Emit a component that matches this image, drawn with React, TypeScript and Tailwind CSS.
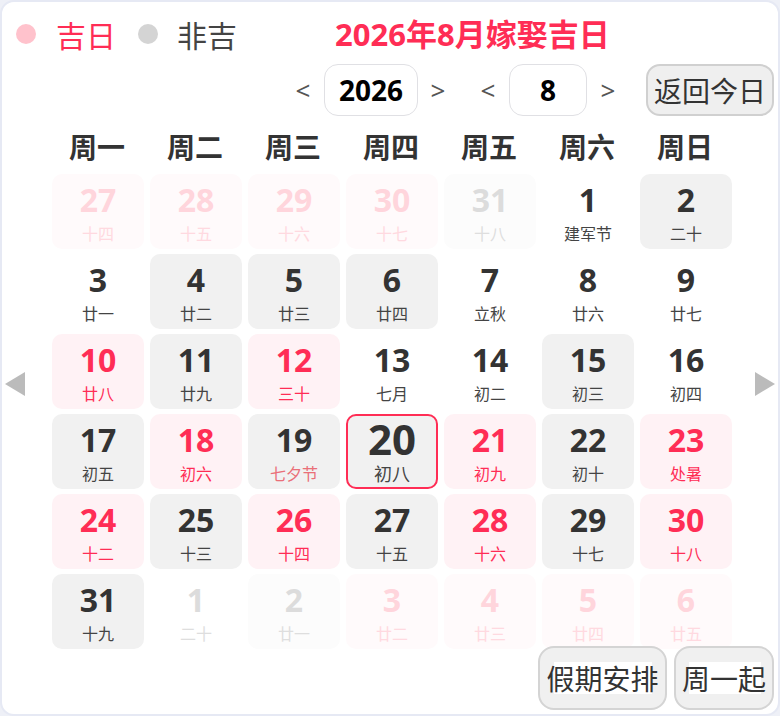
import React from "react";

type Kind = "n" | "g" | "p" | "fp" | "fg" | "fn" | "today" | "gx";
type Cell = [number, string, Kind];

const cells: Cell[] = [
  [27, "十四", "fp"], [28, "十五", "fp"], [29, "十六", "fp"], [30, "十七", "fp"], [31, "十八", "fg"], [1, "建军节", "n"], [2, "二十", "g"],
  [3, "廿一", "n"], [4, "廿二", "g"], [5, "廿三", "g"], [6, "廿四", "g"], [7, "立秋", "n"], [8, "廿六", "n"], [9, "廿七", "n"],
  [10, "廿八", "p"], [11, "廿九", "g"], [12, "三十", "p"], [13, "七月", "n"], [14, "初二", "n"], [15, "初三", "g"], [16, "初四", "n"],
  [17, "初五", "g"], [18, "初六", "p"], [19, "七夕节", "gx"], [20, "初八", "today"], [21, "初九", "p"], [22, "初十", "g"], [23, "处暑", "p"],
  [24, "十二", "p"], [25, "十三", "g"], [26, "十四", "p"], [27, "十五", "g"], [28, "十六", "p"], [29, "十七", "g"], [30, "十八", "p"],
  [31, "十九", "g"], [1, "二十", "fn"], [2, "廿一", "fg"], [3, "廿二", "fp"], [4, "廿三", "fp"], [5, "廿四", "fp"], [6, "廿五", "fp"],
];

const boxCls: Record<Kind, string> = {
  n: "bg-transparent",
  g: "bg-[#f1f1f1]",
  gx: "bg-[#f1f1f1]",
  p: "bg-[#fff2f5]",
  fp: "bg-[#fffafb]",
  fg: "bg-[#fcfcfc]",
  fn: "bg-transparent",
  today: "bg-[#f1f1f1] border-2 border-[#ff2d55]",
};
const numCls: Record<Kind, string> = {
  n: "text-[#333333]",
  g: "text-[#333333]",
  gx: "text-[#333333]",
  p: "text-[#ff2d55]",
  fp: "text-[#ffd5dc]",
  fg: "text-[#dcdcdc]",
  fn: "text-[#dcdcdc]",
  today: "text-[#333333]",
};
const lunCls: Record<Kind, string> = {
  n: "text-[#444444]",
  g: "text-[#444444]",
  gx: "text-[#ea6f78]",
  p: "text-[#ff2d55]",
  fp: "text-[#ffd9e0]",
  fg: "text-[#dedede]",
  fn: "text-[#dedede]",
  today: "text-[#444444]",
};

const weeks = ["周一", "周二", "周三", "周四", "周五", "周六", "周日"];

const cjk = "font-['Noto_Sans_CJK_SC','Noto_Sans',sans-serif]";
const num = "font-['Noto_Sans','Noto_Sans_CJK_SC',sans-serif]";

function Arrow({ ch, ml }: { ch: string; ml: string }) {
  return (
    <span className={`${ml} inline-block w-[28px] text-center text-[26px] leading-none text-[#555555] ${num}`}>{ch}</span>
  );
}

export default function App() {
  return (
    <div className="w-[780px] h-[716px] bg-[#eef0f7]">
      <div className="w-[780px] h-[716px] border-2 border-[#e6e9f4] rounded-[14px] bg-white flex flex-col overflow-hidden">
        {/* Row 1 */}
        <div className={`mt-[8px] h-[48px] flex items-center pl-[14px] ${cjk}`}>
          <span className="w-[20px] h-[20px] rounded-full bg-[#ffc2cc]" />
          <span className="ml-[20px] text-[30px] leading-none text-[#ff2d55]">吉日</span>
          <span className="ml-[22px] w-[20px] h-[20px] rounded-full bg-[#d4d4d4]" />
          <span className="ml-[19px] text-[30px] leading-none text-[#444444]">非吉</span>
          <span className={`ml-[98px] text-[31px] leading-none font-bold text-[#ff2d55] ${num}`}>2026年8月嫁娶吉日</span>
        </div>
        {/* Row 2 */}
        <div className="mt-[6px] h-[52px] flex items-center justify-end pr-[4px]">
          <Arrow ch="<" ml="ml-0" />
          <div className={`ml-[7px] w-[94px] h-[52px] rounded-[14px] border-[1.5px] border-[#e0e0e4] bg-white flex items-center justify-center text-[28px] font-bold text-black ${num}`}>2026</div>
          <Arrow ch=">" ml="ml-[6px]" />
          <Arrow ch="<" ml="ml-[22px]" />
          <div className={`ml-[7px] w-[78px] h-[52px] rounded-[14px] border-[1.5px] border-[#e0e0e4] bg-white flex items-center justify-center text-[28px] font-bold text-black ${num}`}>8</div>
          <Arrow ch=">" ml="ml-[7px]" />
          <div className={`ml-[24px] w-[128px] h-[52px] rounded-[14px] border-2 border-[#d0d0d0] bg-[#efefef] flex items-center justify-center text-[28px] leading-none text-[#333333] ${cjk}`}>返回今日</div>
        </div>
        {/* Calendar */}
        <div className="mt-[12px] flex">
          <div className="w-[50px] flex items-center pl-[3px] pb-[9px]">
            <svg width="20" height="24" viewBox="0 0 20 24"><polygon points="0,12 20,0 20,24" fill="#bbbbbb" /></svg>
          </div>
          <div className="w-[680px] flex flex-col">
            <div className="h-[40px] grid grid-cols-7 gap-x-[6px]">
              {weeks.map((w) => (
                <div key={w} className={`flex items-center justify-center pb-[5px] pr-[2px] text-[28px] font-bold leading-none text-[#333333] ${cjk}`}>{w}</div>
              ))}
            </div>
            <div className="mt-[6px] grid grid-cols-7 gap-x-[6px] gap-y-[5px]">
              {cells.map(([d, l, k], i) => (
                <div key={i} className={`h-[75px] rounded-[10px] flex flex-col items-center ${boxCls[k]}`}>
                  {k === "today" ? (
                    <>
                      <span className={`mt-[2px] h-[42px] text-[42px] font-bold leading-none ${numCls[k]} ${num}`}>{d}</span>
                      <span className={`mt-[4px] text-[18px] leading-none ${lunCls[k]} ${cjk}`}>{l}</span>
                    </>
                  ) : (
                    <>
                      <span className={`mt-[10px] h-[32px] text-[32px] font-bold leading-none ${numCls[k]} ${num}`}>{d}</span>
                      <span className={`mt-[9px] text-[16px] leading-none ${lunCls[k]} ${cjk}`}>{l}</span>
                    </>
                  )}
                </div>
              ))}
            </div>
          </div>
          <div className="flex-1 flex items-center justify-end pr-[3px] pb-[9px]">
            <svg width="20" height="24" viewBox="0 0 20 24"><polygon points="20,12 0,0 0,24" fill="#bbbbbb" /></svg>
          </div>
        </div>
        {/* Bottom buttons */}
        <div className={`-mt-[3px] flex justify-end gap-[7px] pr-[4px] ${cjk}`}>
          <div className="relative w-[129px] h-[64px] rounded-[16px] border-2 border-[#d4d4d4] bg-[#f0f0f0] flex items-center justify-center">
            <span className="absolute left-[14px] top-[14px] w-[98px] h-[32px] bg-white" />
            <span className="relative text-[28px] leading-none text-[#333333]">假期安排</span>
          </div>
          <div className="relative w-[100px] h-[64px] rounded-[16px] border-2 border-[#d4d4d4] bg-[#f0f0f0] flex items-center justify-center">
            <span className="absolute left-[13px] top-[14px] w-[72px] h-[32px] bg-white" />
            <span className="relative text-[28px] leading-none text-[#333333]">周一起</span>
          </div>
        </div>
      </div>
    </div>
  );
}
